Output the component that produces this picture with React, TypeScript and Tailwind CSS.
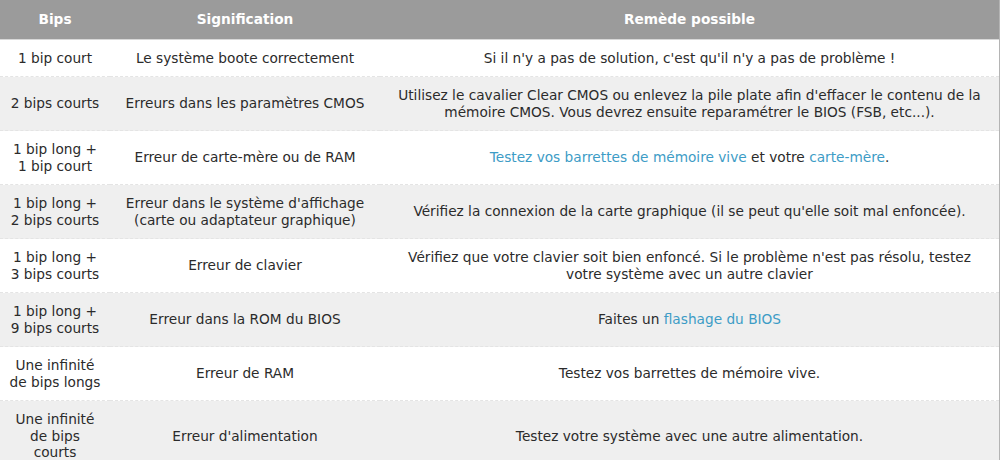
import React from "react";

type Row = {
  bips: React.ReactNode;
  sig: React.ReactNode;
  remede: React.ReactNode;
};

function L({ children }: { children: React.ReactNode }) {
  return <a href="#" className="text-[#3d9cc6] no-underline">{children}</a>;
}

const rows: Row[] = [
  {
    bips: "1 bip court",
    sig: "Le système boote correctement",
    remede: "Si il n'y a pas de solution, c'est qu'il n'y a pas de problème !",
  },
  {
    bips: "2 bips courts",
    sig: "Erreurs dans les paramètres CMOS",
    remede:
      "Utilisez le cavalier Clear CMOS ou enlevez la pile plate afin d'effacer le contenu de la mémoire CMOS. Vous devrez ensuite reparamétrer le BIOS (FSB, etc...).",
  },
  {
    bips: "1 bip long + 1 bip court",
    sig: "Erreur de carte-mère ou de RAM",
    remede: (
      <>
        <L>Testez vos barrettes de mémoire vive</L> et votre <L>carte-mère</L>.
      </>
    ),
  },
  {
    bips: "1 bip long + 2 bips courts",
    sig: "Erreur dans le système d'affichage (carte ou adaptateur graphique)",
    remede: "Vérifiez la connexion de la carte graphique (il se peut qu'elle soit mal enfoncée).",
  },
  {
    bips: "1 bip long + 3 bips courts",
    sig: "Erreur de clavier",
    remede:
      "Vérifiez que votre clavier soit bien enfoncé. Si le problème n'est pas résolu, testez votre système avec un autre clavier",
  },
  {
    bips: "1 bip long + 9 bips courts",
    sig: "Erreur dans la ROM du BIOS",
    remede: (
      <>
        Faites un <L>flashage du BIOS</L>
      </>
    ),
  },
  {
    bips: "Une infinité de bips longs",
    sig: "Erreur de RAM",
    remede: "Testez vos barrettes de mémoire vive.",
  },
  {
    bips: "Une infinité de bips courts",
    sig: "Erreur d'alimentation",
    remede: "Testez votre système avec une autre alimentation.",
  },
];

export default function App() {
  return (
    <div className="w-[1000px] h-[460px] overflow-hidden bg-white border-r border-[#b4b4b4] font-['DejaVu_Sans',Verdana,sans-serif] text-[13.7px] leading-[16.5px] text-[#2b2b2b]">
      <table className="w-full table-fixed border-collapse text-center">
        <colgroup>
          <col className="w-[110px]" />
          <col className="w-[270px]" />
          <col />
        </colgroup>
        <thead>
          <tr className="bg-[#9b9b9b] text-white border-b border-[#d8d8d8]">
            <th className="pt-[11px] pb-[11px] px-2 font-bold">Bips</th>
            <th className="pt-[11px] pb-[11px] px-2 font-bold">Signification</th>
            <th className="pt-[11px] pb-[11px] px-2 font-bold">Remède possible</th>
          </tr>
        </thead>
        <tbody>
          {rows.map((r, i) => (
            <tr
              key={i}
              className={
                (i % 2 === 1 ? "bg-[#efefef] " : "bg-white ") +
                "border-b border-dashed border-[#e4e4e4]"
              }
            >
              <td className="py-[10px] px-[8px] align-middle">{r.bips}</td>
              <td className="py-[10px] px-[8px] align-middle">{r.sig}</td>
              <td className="py-[10px] px-[10px] align-middle">{r.remede}</td>
            </tr>
          ))}
        </tbody>
      </table>
    </div>
  );
}
